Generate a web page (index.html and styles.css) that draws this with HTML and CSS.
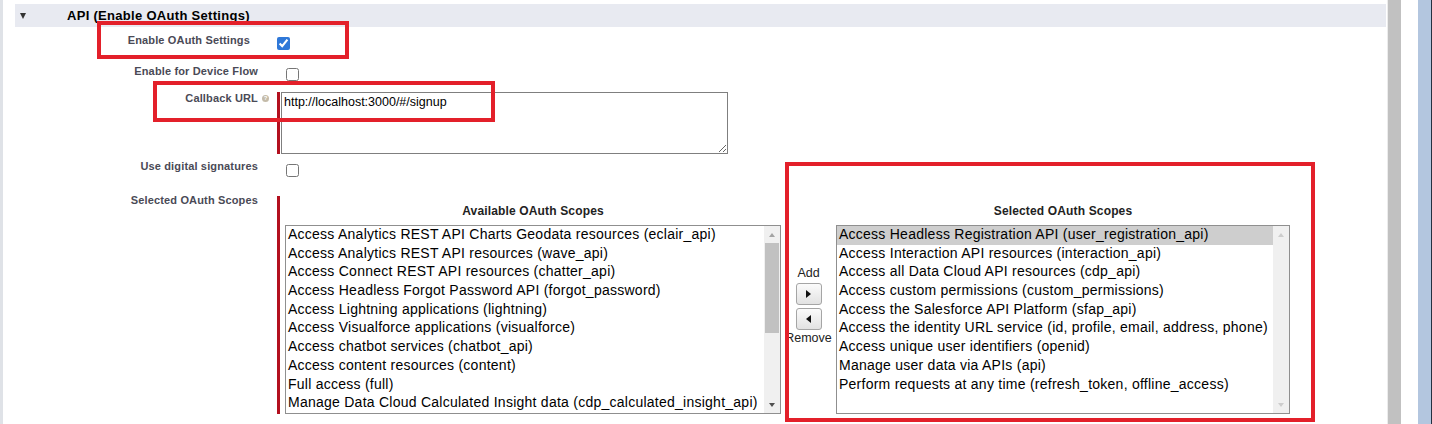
FILE: index.html
```html
<!DOCTYPE html>
<html lang="en">
<head>
<meta charset="utf-8">
<title>API (Enable OAuth Settings)</title>
<link rel="stylesheet" href="styles.css">
</head>
<body>
<div class="page">
  <div class="section-head">
    <span class="twisty"></span>
    <h3 class="section-title">API (Enable OAuth Settings)</h3>
  </div>
  <div class="form">
    <div class="label label--first">Enable OAuth Settings</div>
    <div class="field"><input type="checkbox" class="check check--first" checked></div>

    <div class="label">Enable for Device Flow</div>
    <div class="field"><input type="checkbox" class="check"></div>

    <div class="label label--help">Callback URL<span class="help">?</span></div>
    <div class="field">
      <div class="required">
        <textarea class="url">http://localhost:3000/#/signup</textarea>
      </div>
    </div>

    <div class="label label--low">Use digital signatures</div>
    <div class="field"><input type="checkbox" class="check check--low"></div>

    <div class="label">Selected OAuth Scopes</div>
    <div class="field">
      <div class="required picker">
        <div class="picker-col">
          <div class="picker-head">Available OAuth Scopes</div>
          <div class="list list--avail">
            <div class="items">
              <div class="item">Access Analytics REST API Charts Geodata resources (eclair_api)</div>
              <div class="item">Access Analytics REST API resources (wave_api)</div>
              <div class="item">Access Connect REST API resources (chatter_api)</div>
              <div class="item">Access Headless Forgot Password API (forgot_password)</div>
              <div class="item">Access Lightning applications (lightning)</div>
              <div class="item">Access Visualforce applications (visualforce)</div>
              <div class="item">Access chatbot services (chatbot_api)</div>
              <div class="item">Access content resources (content)</div>
              <div class="item">Full access (full)</div>
              <div class="item">Manage Data Cloud Calculated Insight data (cdp_calculated_insight_api)</div>
            </div>
            <div class="sb">
              <div class="sb-btn"><span class="arrow-up"></span></div>
              <div class="sb-track"><div class="sb-thumb"></div></div>
              <div class="sb-btn"><span class="arrow-down"></span></div>
            </div>
          </div>
        </div>
        <div class="btns">
          <span class="btn-label">Add</span>
          <button class="btn" type="button" title="Add"><span class="tri-right"></span></button>
          <button class="btn" type="button" title="Remove"><span class="tri-left"></span></button>
          <span class="btn-label btn-label--remove">Remove</span>
        </div>
        <div class="picker-col">
          <div class="picker-head">Selected OAuth Scopes</div>
          <div class="list list--sel">
            <div class="items">
              <div class="item item--selected">Access Headless Registration API (user_registration_api)</div>
              <div class="item">Access Interaction API resources (interaction_api)</div>
              <div class="item">Access all Data Cloud API resources (cdp_api)</div>
              <div class="item">Access custom permissions (custom_permissions)</div>
              <div class="item">Access the Salesforce API Platform (sfap_api)</div>
              <div class="item">Access the identity URL service (id, profile, email, address, phone)</div>
              <div class="item">Access unique user identifiers (openid)</div>
              <div class="item">Manage user data via APIs (api)</div>
              <div class="item">Perform requests at any time (refresh_token, offline_access)</div>
            </div>
            <div class="sb sb--disabled">
              <div class="sb-btn"><span class="arrow-up"></span></div>
              <div class="sb-track"></div>
              <div class="sb-btn"><span class="arrow-down"></span></div>
            </div>
          </div>
        </div>
      </div>
    </div>
  </div>
</div>
<div class="vscroll"></div>
<div class="gutter"></div>
<div class="frame"></div>

<div class="mark mark--oauth"></div>
<div class="mark mark--callback"></div>
<div class="mark mark--scopes"></div>
</body>
</html>
```

FILE: styles.css
```css
html, body {
  margin: 0;
  padding: 0;
}

body {
  position: relative;
  display: flex;
  height: 424px;
  overflow: hidden;
  background: #fff;
  font-family: "Liberation Sans", Arial, sans-serif;
}

.page {
  flex: 1;
  min-width: 0;
  border-left: 3px solid #dfe2e7;
  padding-top: 4px;
}

.section-head {
  display: flex;
  align-items: center;
  height: 23px;
  margin-left: 12px;
  margin-right: 1px;
  background: #e8eaf1;
}

.twisty {
  width: 0;
  height: 0;
  margin-left: 5px;
  margin-top: 1px;
  border-left: 3.5px solid transparent;
  border-right: 3.5px solid transparent;
  border-top: 6px solid #333;
}

.section-title {
  margin: 0 0 0 41px;
  font-size: 13px;
  font-weight: bold;
  letter-spacing: 0.3px;
  color: #000;
}

.form {
  display: grid;
  grid-template-columns: 268px 1fr;
  grid-template-rows: 31px 27px 68px 34px auto;
  column-gap: 6px;
  margin-top: 7px;
}

.label {
  text-align: right;
  padding-right: 13px;
  font-size: 11px;
  line-height: 13px;
  font-weight: bold;
  letter-spacing: 0.15px;
  color: #4a4a56;
}

.label--first {
  padding-right: 21px;
}

.label--help {
  display: flex;
  justify-content: flex-end;
  align-items: flex-start;
  padding-right: 2px;
}

.help {
  width: 7px;
  height: 7px;
  margin: 3px 0 0 4px;
  border-radius: 50%;
  background: #c4bba9;
  color: #fff;
  font-size: 6px;
  line-height: 7px;
  text-align: center;
  letter-spacing: 0;
}

.check {
  display: block;
  width: 13px;
  height: 13px;
  margin: 3px 0 0 9px;
  accent-color: #2f78d8;
}

.check--first {
  margin-left: 0;
}

.check--low {
  margin-top: 4px;
}

.required {
  display: flex;
  align-items: flex-start;
  border-left: 3px solid #b3101f;
  padding-left: 1px;
  width: fit-content;
}

.url {
  display: block;
  width: 447px;
  height: 62px;
  box-sizing: border-box;
  margin: 0;
  padding: 2px;
  border: 1px solid #7f7f7f;
  font-family: "Liberation Sans", Arial, sans-serif;
  font-size: 12.5px;
  line-height: 15px;
  color: #000;
  background: #fff;
}

.picker {
  margin-top: 2px;
  padding: 8px 0 0 5px;
}

.picker-col {
  display: flex;
  flex-direction: column;
}

.picker-head {
  height: 14px;
  margin-bottom: 7px;
  font-size: 12px;
  line-height: 14px;
  font-weight: bold;
  letter-spacing: 0.15px;
  text-align: center;
  color: #222;
}

.list {
  display: flex;
  height: 189px;
  box-sizing: border-box;
  border: 1px solid #8f8f8f;
  background: #fff;
}

.list--avail {
  width: 496px;
}

.list--sel {
  width: 454px;
}

.items {
  flex: 1;
  min-width: 0;
  overflow: hidden;
}

.item {
  height: 18.7px;
  padding-left: 2px;
  font-size: 14px;
  line-height: 17px;
  letter-spacing: 0.25px;
  color: #000;
  white-space: nowrap;
}

.item--selected {
  background: #cecece;
}

.sb {
  display: flex;
  flex-direction: column;
  width: 16px;
  background: #f0f0f0;
}

.sb-btn {
  display: flex;
  align-items: center;
  justify-content: center;
  height: 17px;
}

.sb-track {
  flex: 1;
  padding: 0 1px;
}

.sb-thumb {
  height: 90px;
  background: #c1c1c1;
}

.arrow-up {
  width: 0;
  height: 0;
  border-left: 3.5px solid transparent;
  border-right: 3.5px solid transparent;
  border-bottom: 4px solid #a3a3a3;
}

.arrow-down {
  width: 0;
  height: 0;
  border-left: 3.5px solid transparent;
  border-right: 3.5px solid transparent;
  border-top: 4px solid #505050;
}

.sb--disabled .arrow-up {
  border-bottom-color: #cdcdcd;
}

.sb--disabled .arrow-down {
  border-top-color: #cdcdcd;
}

.btns {
  display: flex;
  flex-direction: column;
  align-items: center;
  width: 55px;
  padding-top: 62px;
}

.btn-label {
  font-size: 12.5px;
  line-height: 14px;
  color: #222;
}

.btn-label--remove {
  margin-top: 1px;
}

.btn {
  display: flex;
  align-items: center;
  justify-content: center;
  width: 26px;
  height: 22px;
  box-sizing: border-box;
  margin: 3px 0 0;
  padding: 0;
  border: 1px solid #a5a5a5;
  border-radius: 3px;
  background: linear-gradient(#fbfbfb, #e2e2e2);
}

.tri-right {
  width: 0;
  height: 0;
  border-top: 4.5px solid transparent;
  border-bottom: 4.5px solid transparent;
  border-left: 5px solid #111;
}

.tri-left {
  width: 0;
  height: 0;
  border-top: 4.5px solid transparent;
  border-bottom: 4.5px solid transparent;
  border-right: 5px solid #111;
}

.vscroll {
  flex-shrink: 0;
  width: 13px;
  border-left: 1px solid #ececec;
  background: #c1c1c1;
}

.gutter {
  flex-shrink: 0;
  width: 17px;
  background: #fff;
}

.frame {
  flex-shrink: 0;
  width: 13px;
  border-right: 1px solid #243040;
  background: #b3c6df;
}

.mark {
  position: absolute;
  box-sizing: border-box;
  border: 4px solid #e3202a;
}

.mark--oauth {
  left: 97px;
  top: 21px;
  width: 252px;
  height: 38px;
}

.mark--callback {
  left: 153px;
  top: 81px;
  width: 342px;
  height: 41px;
}

.mark--scopes {
  left: 785px;
  top: 162px;
  width: 530px;
  height: 260px;
}
```
